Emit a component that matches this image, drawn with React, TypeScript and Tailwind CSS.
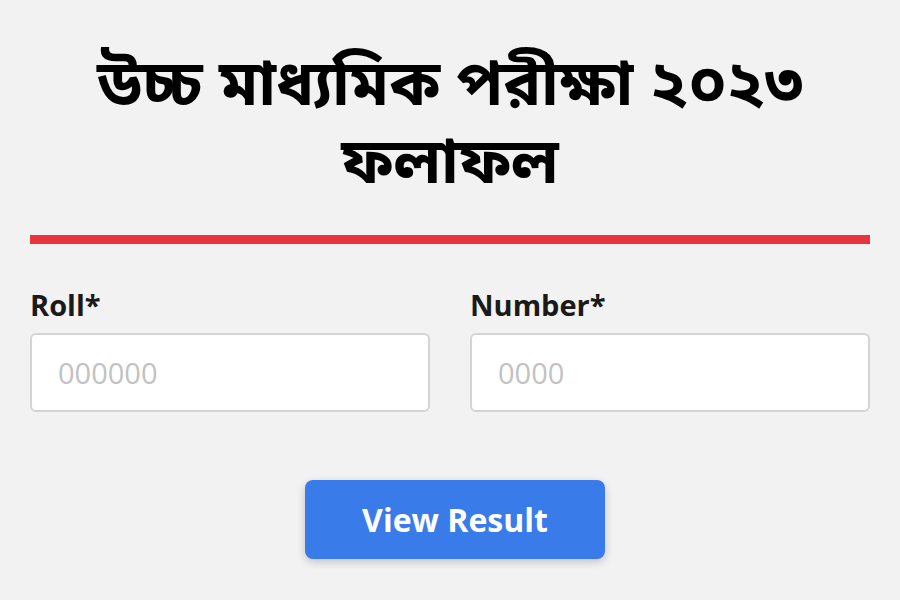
const fields = [
  { label: "Roll*", placeholder: "000000" },
  { label: "Number*", placeholder: "0000" },
];

export default function App() {
  return (
    <div
      className="w-[900px] h-[600px] bg-[#f2f2f2] px-[30px] overflow-hidden"
      style={{ fontFamily: '"Open Sans", "Noto Sans Bengali", "Noto Sans", sans-serif' }}
    >
      <h1 className="pt-[42px] text-center text-[63px] leading-[78px] font-bold text-black">
        উচ্চ মাধ্যমিক পরীক্ষা ২০২৩
        <br />
        ফলাফল
      </h1>

      <div className="mt-[37px] h-[9px] bg-[#e8343f]"></div>

      <div className="mt-[43px] grid grid-cols-2 gap-[40px]">
        {fields.map((field) => (
          <div key={field.label}>
            <label className="block text-[29px] leading-[36px] font-bold text-[#1a1a1a] mb-[10px]">
              {field.label}
            </label>
            <input
              type="text"
              placeholder={field.placeholder}
              className="w-full h-[79px] bg-white border-2 border-[#d4d4d4] rounded-[6px] px-[26px] text-[29px] placeholder:text-[#c2c2c2] outline-none"
            />
          </div>
        ))}
      </div>

      <div className="mt-[68px] pl-[10px] flex justify-center">
        <button className="w-[300px] h-[79px] bg-[#3a7bea] rounded-[8px] text-white text-[32px] font-bold shadow-[0_3px_8px_rgba(0,0,0,0.2)]">
          View Result
        </button>
      </div>
    </div>
  );
}
